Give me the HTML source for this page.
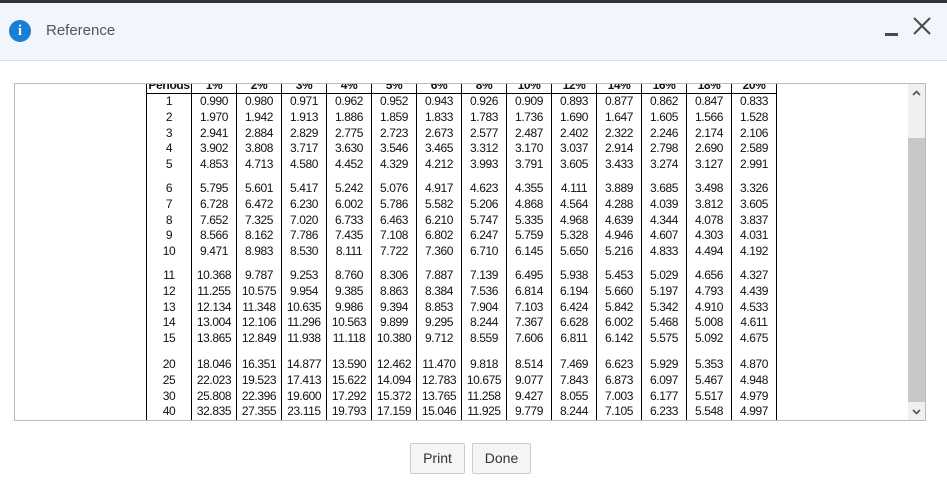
<!DOCTYPE html>
<html><head><meta charset="utf-8"><style>
*{margin:0;padding:0;box-sizing:border-box}
body{width:947px;height:488px;background:#fff;font-family:"Liberation Sans",Arial,sans-serif;position:relative;overflow:hidden}
.top{position:absolute;left:0;top:0;width:947px;height:3px;background:#333}
.hdr{position:absolute;left:0;top:3px;width:947px;height:58px;background:#f1f6fd;border-bottom:1px solid #cfe0f2}
.ico{position:absolute;left:9px;top:17px;width:22px;height:22px;border-radius:50%;background:#1a7fd4;color:#fff;font:bold 15px "Liberation Serif",serif;text-align:center;line-height:22px}
.ttl{position:absolute;left:46px;top:19px;font-size:15px;color:#555}
.min{position:absolute;left:885px;top:30px;width:13px;height:3px;background:#4a4a4a}
.frame{position:absolute;left:14px;top:83px;width:912px;height:338px;border:1px solid #bbb;overflow:hidden}
.sb{position:absolute;right:0;top:0;width:17px;height:100%;background:#f0f0f0}
.thumb{position:absolute;left:0;top:54px;width:17px;height:264px;background:#c8c8c8}
.tw{position:absolute;left:131px;top:0;width:634px;height:336px;overflow:hidden}
table{position:absolute;left:0;top:-5px;border-collapse:collapse;table-layout:fixed;font-size:12px;letter-spacing:-0.4px;color:#111}
td,th{width:45px;border-left:1.5px solid #000;border-right:1.5px solid #000;text-align:center;height:15.8px;padding:0;line-height:15.8px;white-space:nowrap}
th{font-weight:bold;height:14px;line-height:14px;border-bottom:1.5px solid #000}
th span{position:relative;top:-1px}
tr.gap td{height:8px}
tr.gap2 td{height:10px}
tr.last td{border-bottom:1.5px solid #000}
.btn{position:absolute;top:443px;height:31px;border:1px solid #ccc;border-radius:2px;background:#f5f5f5;font-size:14px;color:#333;text-align:center;line-height:29px}
</style></head><body>
<div class="top"></div>
<div class="hdr"><div class="ico">i</div><div class="ttl">Reference</div><div class="min"></div>
<svg style="position:absolute;left:912px;top:13px" width="20" height="20"><path d="M2 2L18 18M18 2L2 18" stroke="#4a4a4a" stroke-width="2"/></svg></div>
<div class="frame">
<div class="tw"><table>
<tr><th><span>Periods</span></th><th><span>1%</span></th><th><span>2%</span></th><th><span>3%</span></th><th><span>4%</span></th><th><span>5%</span></th><th><span>6%</span></th><th><span>8%</span></th><th><span>10%</span></th><th><span>12%</span></th><th><span>14%</span></th><th><span>16%</span></th><th><span>18%</span></th><th><span>20%</span></th></tr>
<tr><td>1</td><td>0.990</td><td>0.980</td><td>0.971</td><td>0.962</td><td>0.952</td><td>0.943</td><td>0.926</td><td>0.909</td><td>0.893</td><td>0.877</td><td>0.862</td><td>0.847</td><td>0.833</td></tr>
<tr><td>2</td><td>1.970</td><td>1.942</td><td>1.913</td><td>1.886</td><td>1.859</td><td>1.833</td><td>1.783</td><td>1.736</td><td>1.690</td><td>1.647</td><td>1.605</td><td>1.566</td><td>1.528</td></tr>
<tr><td>3</td><td>2.941</td><td>2.884</td><td>2.829</td><td>2.775</td><td>2.723</td><td>2.673</td><td>2.577</td><td>2.487</td><td>2.402</td><td>2.322</td><td>2.246</td><td>2.174</td><td>2.106</td></tr>
<tr><td>4</td><td>3.902</td><td>3.808</td><td>3.717</td><td>3.630</td><td>3.546</td><td>3.465</td><td>3.312</td><td>3.170</td><td>3.037</td><td>2.914</td><td>2.798</td><td>2.690</td><td>2.589</td></tr>
<tr><td>5</td><td>4.853</td><td>4.713</td><td>4.580</td><td>4.452</td><td>4.329</td><td>4.212</td><td>3.993</td><td>3.791</td><td>3.605</td><td>3.433</td><td>3.274</td><td>3.127</td><td>2.991</td></tr>
<tr class="gap"><td></td><td></td><td></td><td></td><td></td><td></td><td></td><td></td><td></td><td></td><td></td><td></td><td></td><td></td></tr>
<tr><td>6</td><td>5.795</td><td>5.601</td><td>5.417</td><td>5.242</td><td>5.076</td><td>4.917</td><td>4.623</td><td>4.355</td><td>4.111</td><td>3.889</td><td>3.685</td><td>3.498</td><td>3.326</td></tr>
<tr><td>7</td><td>6.728</td><td>6.472</td><td>6.230</td><td>6.002</td><td>5.786</td><td>5.582</td><td>5.206</td><td>4.868</td><td>4.564</td><td>4.288</td><td>4.039</td><td>3.812</td><td>3.605</td></tr>
<tr><td>8</td><td>7.652</td><td>7.325</td><td>7.020</td><td>6.733</td><td>6.463</td><td>6.210</td><td>5.747</td><td>5.335</td><td>4.968</td><td>4.639</td><td>4.344</td><td>4.078</td><td>3.837</td></tr>
<tr><td>9</td><td>8.566</td><td>8.162</td><td>7.786</td><td>7.435</td><td>7.108</td><td>6.802</td><td>6.247</td><td>5.759</td><td>5.328</td><td>4.946</td><td>4.607</td><td>4.303</td><td>4.031</td></tr>
<tr><td>10</td><td>9.471</td><td>8.983</td><td>8.530</td><td>8.111</td><td>7.722</td><td>7.360</td><td>6.710</td><td>6.145</td><td>5.650</td><td>5.216</td><td>4.833</td><td>4.494</td><td>4.192</td></tr>
<tr class="gap"><td></td><td></td><td></td><td></td><td></td><td></td><td></td><td></td><td></td><td></td><td></td><td></td><td></td><td></td></tr>
<tr><td>11</td><td>10.368</td><td>9.787</td><td>9.253</td><td>8.760</td><td>8.306</td><td>7.887</td><td>7.139</td><td>6.495</td><td>5.938</td><td>5.453</td><td>5.029</td><td>4.656</td><td>4.327</td></tr>
<tr><td>12</td><td>11.255</td><td>10.575</td><td>9.954</td><td>9.385</td><td>8.863</td><td>8.384</td><td>7.536</td><td>6.814</td><td>6.194</td><td>5.660</td><td>5.197</td><td>4.793</td><td>4.439</td></tr>
<tr><td>13</td><td>12.134</td><td>11.348</td><td>10.635</td><td>9.986</td><td>9.394</td><td>8.853</td><td>7.904</td><td>7.103</td><td>6.424</td><td>5.842</td><td>5.342</td><td>4.910</td><td>4.533</td></tr>
<tr><td>14</td><td>13.004</td><td>12.106</td><td>11.296</td><td>10.563</td><td>9.899</td><td>9.295</td><td>8.244</td><td>7.367</td><td>6.628</td><td>6.002</td><td>5.468</td><td>5.008</td><td>4.611</td></tr>
<tr><td>15</td><td>13.865</td><td>12.849</td><td>11.938</td><td>11.118</td><td>10.380</td><td>9.712</td><td>8.559</td><td>7.606</td><td>6.811</td><td>6.142</td><td>5.575</td><td>5.092</td><td>4.675</td></tr>
<tr class="gap2"><td></td><td></td><td></td><td></td><td></td><td></td><td></td><td></td><td></td><td></td><td></td><td></td><td></td><td></td></tr>
<tr><td>20</td><td>18.046</td><td>16.351</td><td>14.877</td><td>13.590</td><td>12.462</td><td>11.470</td><td>9.818</td><td>8.514</td><td>7.469</td><td>6.623</td><td>5.929</td><td>5.353</td><td>4.870</td></tr>
<tr><td>25</td><td>22.023</td><td>19.523</td><td>17.413</td><td>15.622</td><td>14.094</td><td>12.783</td><td>10.675</td><td>9.077</td><td>7.843</td><td>6.873</td><td>6.097</td><td>5.467</td><td>4.948</td></tr>
<tr><td>30</td><td>25.808</td><td>22.396</td><td>19.600</td><td>17.292</td><td>15.372</td><td>13.765</td><td>11.258</td><td>9.427</td><td>8.055</td><td>7.003</td><td>6.177</td><td>5.517</td><td>4.979</td></tr>
<tr class="last"><td>40</td><td>32.835</td><td>27.355</td><td>23.115</td><td>19.793</td><td>17.159</td><td>15.046</td><td>11.925</td><td>9.779</td><td>8.244</td><td>7.105</td><td>6.233</td><td>5.548</td><td>4.997</td></tr>
</table></div>
<div class="sb"><svg style="position:absolute;left:4px;top:6px" width="9" height="6"><path d="M1 5L4.5 1.5L8 5" stroke="#555" stroke-width="1.6" fill="none"/></svg><div class="thumb"></div><svg style="position:absolute;left:4px;top:325px" width="9" height="6"><path d="M1 1L4.5 4.5L8 1" stroke="#555" stroke-width="1.6" fill="none"/></svg></div>
</div>
<div class="btn" style="left:410px;width:55px">Print</div>
<div class="btn" style="left:472px;width:59px">Done</div>
</body></html>
